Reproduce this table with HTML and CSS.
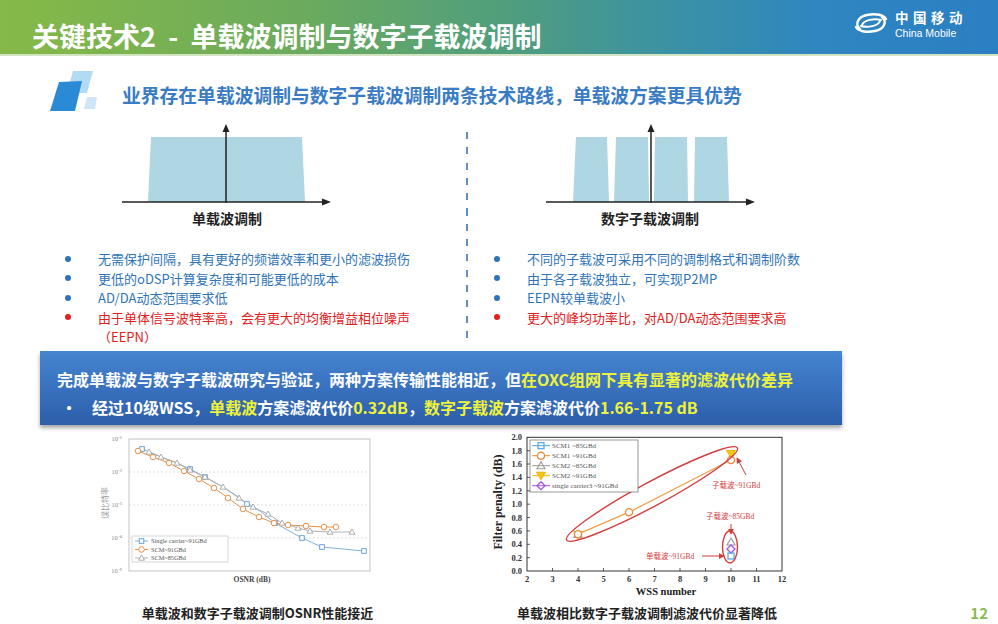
FILE: index.html
```html
<!DOCTYPE html>
<html lang="zh-CN">
<head>
<meta charset="utf-8">
<title>关键技术2 - 单载波调制与数字子载波调制</title>
<link rel="stylesheet" href="styles.css">
</head>
<body>
<div class="slide">
  <header class="topbar">
    <h1 class="title">关键技术2&nbsp;&nbsp;-&nbsp;&nbsp;单载波调制与数字子载波调制</h1>
    <div class="brand">
      <svg class="brand-logo" viewBox="0 0 38 22" width="38" height="22">
        <g fill="none" stroke="#fff" stroke-linecap="round">
          <path stroke-width="2.4" d="M8 17 C 3 13, 5 5, 15 3 C 24 1, 32 3, 34 7"/>
          <path stroke-width="2.4" d="M30 5 C 35 9, 33 17, 23 19 C 14 21, 6 19, 4 15"/>
          <path stroke-width="2" d="M10 13 C 12 8, 22 6, 29 8"/>
          <path stroke-width="2" d="M9 14 C 16 16, 26 14, 28 9"/>
        </g>
      </svg>
      <div class="brand-text">
        <span class="brand-cn">中国移动</span>
        <span class="brand-en">China Mobile</span>
      </div>
    </div>
  </header>

  <div class="subtitle">
    <svg class="sub-icon" viewBox="0 0 52 42" width="52" height="42">
      <polygon points="25,1 45,1 39,23 19,23" fill="#b3daf3"/>
      <polygon points="11,12 34,11 27,41 2,41" fill="#2b8ad6"/>
      <polygon points="39,27 49,27 47,39 36,39" fill="#cfe6f6"/>
    </svg>
    <h2 class="sub-text">业界存在单载波调制与数字子载波调制两条技术路线，单载波方案更具优势</h2>
  </div>

  <section class="compare">
    <div class="col">
      <svg class="spectrum" viewBox="0 0 230 108" width="230" height="108">
        <polygon points="33,81 36,16 187,16 190,81" fill="#aed6e3"/>
        <line x1="7" y1="81" x2="210" y2="81" stroke="#222" stroke-width="1.5"/>
        <polygon points="216,81 207,77.5 207,84.5" fill="#222"/>
        <line x1="111" y1="82" x2="111" y2="9" stroke="#222" stroke-width="1.5"/>
        <polygon points="111,3 107.5,11 114.5,11" fill="#222"/>
        <text class="spec-label" x="112" y="103" text-anchor="middle">单载波调制</text>
      </svg>
      <ul class="points">
        <li class="pt">无需保护间隔，具有更好的频谱效率和更小的滤波损伤</li>
        <li class="pt">更低的oDSP计算复杂度和可能更低的成本</li>
        <li class="pt">AD/DA动态范围要求低</li>
        <li class="pt pt-bad">由于单体信号波特率高，会有更大的均衡增益相位噪声<br>（EEPN）</li>
      </ul>
    </div>
    <div class="divider"></div>
    <div class="col">
      <svg class="spectrum" viewBox="0 0 230 108" width="230" height="108">
        <polygon points="29,81 32,16 63,16 65,81" fill="#aed6e3"/>
        <polygon points="70,81 72,16 104,16 105,81" fill="#aed6e3"/>
        <polygon points="110,81 111,16 143,16 144,81" fill="#aed6e3"/>
        <polygon points="150,81 151,16 183,16 185,81" fill="#aed6e3"/>
        <line x1="2" y1="81" x2="205" y2="81" stroke="#222" stroke-width="1.5"/>
        <polygon points="211,81 202,77.5 202,84.5" fill="#222"/>
        <line x1="107" y1="82" x2="107" y2="9" stroke="#222" stroke-width="1.5"/>
        <polygon points="107,3 103.5,11 110.5,11" fill="#222"/>
        <text class="spec-label" x="106" y="103" text-anchor="middle">数字子载波调制</text>
      </svg>
      <ul class="points">
        <li class="pt">不同的子载波可采用不同的调制格式和调制阶数</li>
        <li class="pt">由于各子载波独立，可实现P2MP</li>
        <li class="pt">EEPN较单载波小</li>
        <li class="pt pt-bad">更大的峰均功率比，对AD/DA动态范围要求高</li>
      </ul>
    </div>
  </section>

  <div class="banner">
    <p class="banner-main">完成单载波与数字子载波研究与验证，两种方案传输性能相近，但<span class="hl">在OXC组网下具有显著的滤波代价差异</span></p>
    <p class="banner-sub"><span class="banner-dot">•</span>经过10级WSS，<span class="hl">单载波</span>方案滤波代价<span class="hl">0.32dB</span>，<span class="hl">数字子载波</span>方案滤波代价<span class="hl">1.66-1.75 dB</span></p>
  </div>

  <section class="figures">
    <figure class="fig fig-left">
      <svg class="chart" viewBox="0 0 295 170" width="295" height="170">
        <defs>
          <g id="sq"><rect x="-2.3" y="-2.3" width="4.6" height="4.6" fill="#fff" stroke="#5b9bd5" stroke-width="0.9"/></g>
          <g id="ci"><circle r="2.8" fill="#fff" stroke="#e8924a" stroke-width="1"/></g>
          <g id="tr"><path d="M0,-3 L3,2.2 L-3,2.2 Z" fill="#fff" stroke="#a6a6a6" stroke-width="0.9"/></g>
        </defs>
        <rect x="34" y="8" width="241" height="132" fill="#fff" stroke="#b5b5b5" stroke-width="0.8"/>
        <g stroke="#d2d2d2" stroke-width="0.7" stroke-dasharray="2 2">
          <line x1="34" y1="41" x2="275" y2="41"/>
          <line x1="34" y1="74" x2="275" y2="74"/>
          <line x1="34" y1="107" x2="275" y2="107"/>
        </g>
        <g class="ax-small" text-anchor="end">
          <text x="27" y="10">10⁻¹</text>
          <text x="27" y="43">10⁻²</text>
          <text x="27" y="76">10⁻³</text>
          <text x="27" y="109">10⁻⁴</text>
          <text x="27" y="142">10⁻⁵</text>
        </g>
        <text class="ax-cn" transform="translate(13 72) rotate(-90)" text-anchor="middle">误比特率</text>
        <text class="ax-osnr" x="157" y="151" text-anchor="middle">OSNR (dB)</text>
        <polyline points="47,18 55,21 66,26 82,32 95,38 110,46 128,56 142,65 152,73 165,80 180,92 207,107 227,116 269,120" fill="none" stroke="#7fb2e0" stroke-width="1"/>
        <polyline points="43,20 58,26 74,32 89,40 104,48 119,57 133,67 148,78 164,86 179,92 193,94 211,95 229,96 241,96" fill="none" stroke="#e8924a" stroke-width="1"/>
        <polyline points="54,21 66,26 82,32 95,39 110,46 128,56 144,67 158,76 173,83 187,92 203,97 215,100 235,101 257,101" fill="none" stroke="#b0b0b0" stroke-width="1"/>
        <use href="#sq" x="47" y="18"/><use href="#sq" x="95" y="38"/><use href="#sq" x="110" y="46"/><use href="#sq" x="152" y="73"/><use href="#sq" x="180" y="92"/><use href="#sq" x="207" y="107"/><use href="#sq" x="227" y="116"/><use href="#sq" x="269" y="120"/>
        <use href="#ci" x="43" y="20"/><use href="#ci" x="58" y="26"/><use href="#ci" x="74" y="32"/><use href="#ci" x="89" y="40"/><use href="#ci" x="104" y="48"/><use href="#ci" x="119" y="57"/><use href="#ci" x="133" y="67"/><use href="#ci" x="148" y="78"/><use href="#ci" x="164" y="86"/><use href="#ci" x="179" y="92"/><use href="#ci" x="193" y="94"/><use href="#ci" x="211" y="95"/><use href="#ci" x="229" y="96"/><use href="#ci" x="241" y="96"/>
        <use href="#tr" x="54" y="21"/><use href="#tr" x="66" y="26"/><use href="#tr" x="82" y="32"/><use href="#tr" x="95" y="39"/><use href="#tr" x="110" y="46"/><use href="#tr" x="128" y="56"/><use href="#tr" x="144" y="67"/><use href="#tr" x="158" y="76"/><use href="#tr" x="173" y="83"/><use href="#tr" x="187" y="92"/><use href="#tr" x="203" y="97"/><use href="#tr" x="215" y="100"/><use href="#tr" x="235" y="101"/><use href="#tr" x="257" y="101"/>
        <rect x="37" y="105" width="96" height="26" fill="#fff" stroke="#bbb" stroke-width="0.6"/>
        <line x1="40" y1="110" x2="53" y2="110" stroke="#7fb2e0" stroke-width="1"/><use href="#sq" x="46.5" y="110"/>
        <line x1="40" y1="118.5" x2="53" y2="118.5" stroke="#e8924a" stroke-width="1"/><use href="#ci" x="46.5" y="118.5"/>
        <line x1="40" y1="127" x2="53" y2="127" stroke="#b0b0b0" stroke-width="1"/><use href="#tr" x="46.5" y="127"/>
        <g class="leg-l">
          <text x="56" y="112.2">Single carrier~91GBd</text>
          <text x="56" y="120.7">SCM~91GBd</text>
          <text x="56" y="129.2">SCM~85GBd</text>
        </g>
      </svg>
      <figcaption class="cap">单载波和数字子载波调制OSNR性能接近</figcaption>
    </figure>

    <figure class="fig fig-right">
      <svg class="chart" viewBox="0 0 312 170" width="312" height="170">
        <defs>
          <g id="rsq"><rect x="-3" y="-3" width="6" height="6" fill="none" stroke="#4fa3e0" stroke-width="1.2"/></g>
          <g id="rci"><circle r="3.6" fill="#fff" stroke="#e88a3c" stroke-width="1.3"/></g>
          <g id="rtu"><path d="M0,-4 L4,3 L-4,3 Z" fill="none" stroke="#9a9a9a" stroke-width="1.1"/></g>
          <g id="rtd"><path d="M0,4 L4.5,-3.5 L-4.5,-3.5 Z" fill="#f5c518" stroke="#f0b400" stroke-width="1"/></g>
          <g id="rdi"><path d="M0,-4 L4,0 L0,4 L-4,0 Z" fill="none" stroke="#a455d6" stroke-width="1.3"/></g>
          <marker id="arr" viewBox="0 0 8 8" refX="7" refY="4" markerWidth="6" markerHeight="6" orient="auto">
            <path d="M0,0 L8,4 L0,8 Z" fill="#d23c3c"/>
          </marker>
        </defs>
        <rect x="39" y="6.3" width="255" height="133.7" fill="#fff" stroke="#333" stroke-width="1"/>
        <g stroke="#333" stroke-width="0.8">
          <line x1="39" y1="126.6" x2="42" y2="126.6"/><line x1="39" y1="113.3" x2="42" y2="113.3"/><line x1="39" y1="99.9" x2="42" y2="99.9"/><line x1="39" y1="86.5" x2="42" y2="86.5"/><line x1="39" y1="73.2" x2="42" y2="73.2"/><line x1="39" y1="59.8" x2="42" y2="59.8"/><line x1="39" y1="46.4" x2="42" y2="46.4"/><line x1="39" y1="33" x2="42" y2="33"/><line x1="39" y1="19.7" x2="42" y2="19.7"/>
          <line x1="64.5" y1="140" x2="64.5" y2="137"/><line x1="90" y1="140" x2="90" y2="137"/><line x1="115.5" y1="140" x2="115.5" y2="137"/><line x1="141" y1="140" x2="141" y2="137"/><line x1="166.5" y1="140" x2="166.5" y2="137"/><line x1="192" y1="140" x2="192" y2="137"/><line x1="217.5" y1="140" x2="217.5" y2="137"/><line x1="243" y1="140" x2="243" y2="137"/><line x1="268.5" y1="140" x2="268.5" y2="137"/>
        </g>
        <g class="tick-r" text-anchor="end">
          <text x="34" y="143">0.0</text><text x="34" y="129.6">0.2</text><text x="34" y="116.3">0.4</text><text x="34" y="102.9">0.6</text><text x="34" y="89.5">0.8</text><text x="34" y="76.2">1.0</text><text x="34" y="62.8">1.2</text><text x="34" y="49.4">1.4</text><text x="34" y="36">1.6</text><text x="34" y="22.7">1.8</text><text x="34" y="9.3">2.0</text>
        </g>
        <g class="tick-r" text-anchor="middle">
          <text x="39" y="151">2</text><text x="64.5" y="151">3</text><text x="90" y="151">4</text><text x="115.5" y="151">5</text><text x="141" y="151">6</text><text x="166.5" y="151">7</text><text x="192" y="151">8</text><text x="217.5" y="151">9</text><text x="243" y="151">10</text><text x="268.5" y="151">11</text><text x="294" y="151">12</text>
        </g>
        <text class="ax-r" x="178" y="164" text-anchor="middle">WSS number</text>
        <text class="ax-r ax-ry" transform="translate(14 71) rotate(-90)" text-anchor="middle">Filter penalty (dB)</text>

        <polyline points="90,103.2 141,81.2 243,29" fill="none" stroke="#f0a050" stroke-width="1.3"/>
        <use href="#rtu" x="90" y="103.5"/>
        <use href="#rtd" x="90" y="104"/>
        <use href="#rci" x="90" y="103.2"/>
        <use href="#rci" x="141" y="81.2"/>
        <use href="#rtd" x="243" y="23"/>
        <use href="#rci" x="243" y="29"/>
        <use href="#rtu" x="243" y="111"/>
        <use href="#rdi" x="243" y="118"/>
        <use href="#rsq" x="243" y="125"/>

        <ellipse cx="164" cy="63" rx="97" ry="12" transform="rotate(-28.3 164 63)" fill="none" stroke="#d23c3c" stroke-width="1.4"/>
        <ellipse cx="242" cy="116" rx="7.5" ry="16" fill="none" stroke="#d23c3c" stroke-width="1.4"/>
        <line x1="258" y1="44" x2="249" y2="27" stroke="#d23c3c" stroke-width="1" marker-end="url(#arr)"/>
        <line x1="243" y1="93" x2="243" y2="103" stroke="#d23c3c" stroke-width="1" marker-end="url(#arr)"/>
        <line x1="214" y1="125" x2="236" y2="125" stroke="#d23c3c" stroke-width="1" marker-end="url(#arr)"/>
        <g class="anno">
          <text x="224" y="56.5">子载波~91GBd</text>
          <text x="218" y="88">子载波~85GBd</text>
          <text x="158" y="127.5">单载波~91GBd</text>
        </g>

        <rect x="42" y="9" width="108" height="52" fill="#fff" stroke="#555" stroke-width="0.6"/>
        <line x1="44" y1="14.7" x2="62" y2="14.7" stroke="#4fa3e0" stroke-width="1"/><use href="#rsq" x="53" y="14.7"/>
        <line x1="44" y1="24.7" x2="62" y2="24.7" stroke="#e88a3c" stroke-width="1"/><use href="#rci" x="53" y="24.7"/>
        <line x1="44" y1="34.7" x2="62" y2="34.7" stroke="#9a9a9a" stroke-width="1"/><use href="#rtu" x="53" y="34.7"/>
        <line x1="44" y1="44.7" x2="62" y2="44.7" stroke="#f0b400" stroke-width="1"/><use href="#rtd" x="53" y="44.7"/>
        <line x1="44" y1="54.7" x2="62" y2="54.7" stroke="#a455d6" stroke-width="1"/><use href="#rdi" x="53" y="54.7"/>
        <g class="leg-r">
          <text x="64" y="17.2">SCM1 ~85GBd</text>
          <text x="64" y="27.2">SCM1 ~91GBd</text>
          <text x="64" y="37.2">SCM2 ~85GBd</text>
          <text x="64" y="47.2">SCM2 ~91GBd</text>
          <text x="64" y="57.2">single carrier3 ~91GBd</text>
        </g>
      </svg>
      <figcaption class="cap">单载波相比数字子载波调制滤波代价显著降低</figcaption>
    </figure>

    <span class="page-no">12</span>
  </section>
</div>
</body>
</html>
```

FILE: styles.css
```css
* { box-sizing: border-box; }

html, body {
  margin: 0;
  padding: 0;
  background: #fff;
}

body {
  font-family: "Noto Sans CJK SC", "Noto Sans", "Liberation Sans", sans-serif;
  color: #222;
}

.slide {
  width: 998px;
  height: 624px;
  overflow: hidden;
  background: #fff;
}

/* ---------- header ---------- */
.topbar {
  height: 56px;
  display: flex;
  align-items: flex-start;
  justify-content: space-between;
  padding: 0 31px 0 32px;
  background: linear-gradient(90deg, #86b947 0%, #6cab5d 30%, #4e9d80 52%, #3a91a6 68%, #2f86c0 82%, #2b7fc3 100%);
  border-bottom: 2px solid #d3e4c3;
}

.title {
  margin: 22px 0 0 0;
  font-size: 27px;
  font-weight: 700;
  color: #fff;
  line-height: 1;
}

.brand {
  display: flex;
  align-items: center;
  gap: 5px;
  margin-top: 7px;
}

.brand-logo { display: block; }

.brand-text {
  display: flex;
  flex-direction: column;
  color: #fff;
}

.brand-cn {
  display: block;
  font-size: 13.5px;
  font-weight: 700;
  letter-spacing: 4.5px;
  line-height: normal;
}

.brand-en {
  display: block;
  font-family: "Liberation Sans", sans-serif;
  font-size: 10.5px;
  line-height: normal;
}

/* ---------- subtitle ---------- */
.subtitle {
  display: flex;
  align-items: center;
  height: 42px;
  margin-top: 14px;
  padding-left: 48px;
  gap: 22px;
}

.sub-icon { display: block; flex: none; }

.sub-text {
  margin: 7px 0 0 0;
  font-size: 18.8px;
  font-weight: 700;
  color: #3a7cc3;
  line-height: 22px;
}

/* ---------- comparison ---------- */
.compare {
  display: grid;
  grid-template-columns: 385px 2px 1fr;
  column-gap: 21px;
  padding-left: 60px;
  margin-top: 9px;
}

.col { display: flex; flex-direction: column; }

.spectrum {
  display: block;
  margin-left: 55px;
}

.spec-label {
  font-size: 14px;
  font-weight: 700;
  fill: #222;
}

.divider {
  width: 2px;
  height: 206px;
  margin-top: 11px;
  background: repeating-linear-gradient(to bottom, #5c8ec4 0 7px, transparent 7px 15.3px);
}

.points {
  list-style: none;
  margin: 20px 0 0 0;
  padding: 0;
}

.pt {
  display: flex;
  align-items: flex-start;
  font-size: 13px;
  line-height: 19.5px;
  color: #2f74b8;
}

.pt::before {
  content: "";
  flex: none;
  width: 6px;
  height: 6px;
  border-radius: 50%;
  background: #2f74b8;
  margin: 6.75px 27px 0 5px;
}

.pt-bad { color: #e3201b; }
.pt-bad::before { background: #e3201b; }

/* ---------- banner ---------- */
.banner {
  width: 802px;
  height: 74px;
  margin: 4px 0 0 40px;
  padding: 14px 0 4px 17px;
  background: linear-gradient(180deg, #4584cf 0%, #3a73c0 45%, #2c5ea9 100%);
  box-shadow: 0 3px 4px rgba(0, 0, 0, 0.35);
  color: #fff;
  font-size: 16px;
  font-weight: 700;
}

.banner p {
  margin: 0;
  line-height: 28px;
  white-space: nowrap;
}

.banner-dot {
  display: inline-block;
  width: 35px;
  padding-left: 4px;
}

.hl { color: #eef23a; }

/* ---------- figures ---------- */
.figures {
  display: grid;
  grid-template-columns: 325px 312px 1fr;
  column-gap: 68px;
  padding-left: 95px;
  margin-top: 6px;
}

.fig {
  margin: 0;
  display: flex;
  flex-direction: column;
}

.chart { display: block; }

.cap {
  margin-top: 2px;
  font-size: 13px;
  font-weight: 700;
  line-height: 20px;
  color: #222;
  text-align: center;
}

.fig-right .cap { padding-left: 6px; }

.ax-small {
  font-family: "Liberation Serif", serif;
  font-size: 6.5px;
  fill: #8a8a8a;
}

.ax-cn {
  font-size: 8px;
  fill: #9a9a9a;
}

.ax-osnr {
  font-family: "Liberation Serif", serif;
  font-size: 7.5px;
  font-weight: 700;
  fill: #444;
}

.leg-l {
  font-family: "Liberation Serif", serif;
  font-size: 6.3px;
  fill: #555;
}

.tick-r {
  font-family: "Liberation Serif", serif;
  font-size: 8.5px;
  font-weight: 700;
  fill: #333;
}

.ax-r {
  font-family: "Liberation Serif", serif;
  font-size: 10.5px;
  font-weight: 700;
  fill: #222;
}

.ax-ry { font-size: 12px; }

.anno {
  font-family: "Liberation Serif", "Noto Sans CJK SC", serif;
  font-size: 7.5px;
  fill: #d23c3c;
}

.leg-r {
  font-family: "Liberation Serif", serif;
  font-size: 7px;
  fill: #555;
}

.page-no {
  justify-self: end;
  align-self: end;
  margin: 0 10px 0 0;
  font-size: 15px;
  font-weight: 700;
  line-height: 20px;
  color: #8cba52;
}
```
